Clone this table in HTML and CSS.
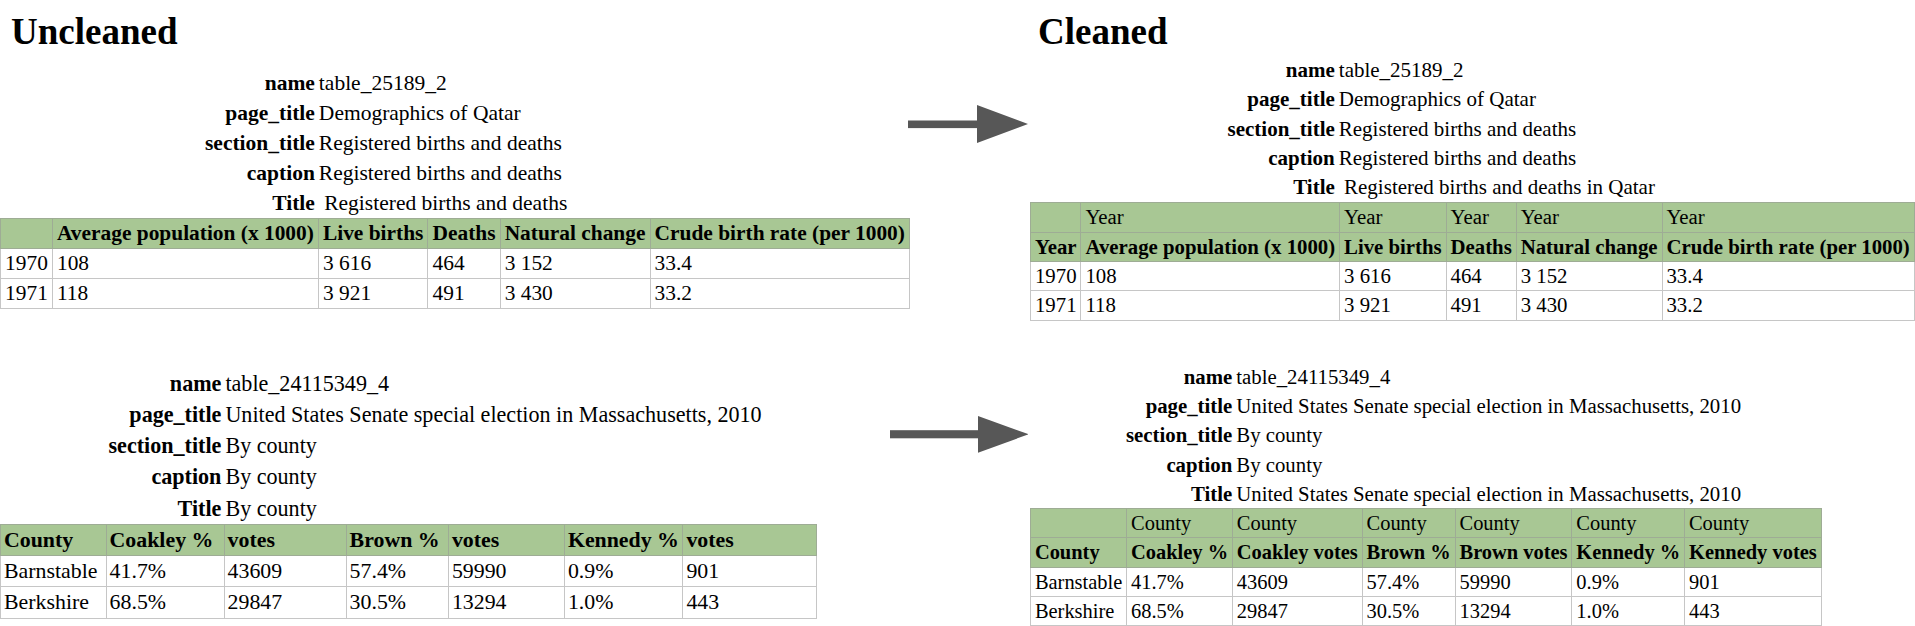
FILE: index.html
```html
<!DOCTYPE html>
<html lang="en">
<head>
<meta charset="utf-8">
<title>Uncleaned vs Cleaned</title>
<link rel="stylesheet" href="styles.css">
</head>
<body>
<div class="figure">
  <div class="row row-1">
    <section class="panel panel-u1">
      <h1 class="panel-title">Uncleaned</h1>
      <div class="meta">
        <span class="k">name</span><span class="v">table_25189_2</span>
        <span class="k">page_title</span><span class="v">Demographics of Qatar</span>
        <span class="k">section_title</span><span class="v">Registered births and deaths</span>
        <span class="k">caption</span><span class="v">Registered births and deaths</span>
        <span class="k">Title</span><span class="v">&nbsp;Registered births and deaths</span>
      </div>
      <table class="data">
        <thead>
          <tr><th></th><th>Average population (x 1000)</th><th>Live births</th><th>Deaths</th><th>Natural change</th><th>Crude birth rate (per 1000)</th></tr>
        </thead>
        <tbody>
          <tr><td>1970</td><td>108</td><td>3 616</td><td>464</td><td>3 152</td><td>33.4</td></tr>
          <tr><td>1971</td><td>118</td><td>3 921</td><td>491</td><td>3 430</td><td>33.2</td></tr>
        </tbody>
      </table>
    </section>
    <div class="arrow arrow-1">
      <svg viewBox="0 0 120 38" width="120" height="38"><rect x="0" y="15.5" width="71" height="7.6" fill="#575757"/><polygon points="69,0 120,19 69,38" fill="#575757"/></svg>
    </div>
    <section class="panel panel-c1">
      <h1 class="panel-title">Cleaned</h1>
      <div class="meta">
        <span class="k">name</span><span class="v">table_25189_2</span>
        <span class="k">page_title</span><span class="v">Demographics of Qatar</span>
        <span class="k">section_title</span><span class="v">Registered births and deaths</span>
        <span class="k">caption</span><span class="v">Registered births and deaths</span>
        <span class="k">Title</span><span class="v">&nbsp;Registered births and deaths in Qatar</span>
      </div>
      <table class="data">
        <thead>
          <tr><th></th><th class="sub">Year</th><th class="sub">Year</th><th class="sub">Year</th><th class="sub">Year</th><th class="sub">Year</th></tr>
          <tr><th>Year</th><th>Average population (x 1000)</th><th>Live births</th><th>Deaths</th><th>Natural change</th><th>Crude birth rate (per 1000)</th></tr>
        </thead>
        <tbody>
          <tr><td>1970</td><td>108</td><td>3 616</td><td>464</td><td>3 152</td><td>33.4</td></tr>
          <tr><td>1971</td><td>118</td><td>3 921</td><td>491</td><td>3 430</td><td>33.2</td></tr>
        </tbody>
      </table>
    </section>
  </div>

  <div class="row row-2">
    <section class="panel panel-u2">
      <div class="meta">
        <span class="k">name</span><span class="v">table_24115349_4</span>
        <span class="k">page_title</span><span class="v">United States Senate special election in Massachusetts, 2010</span>
        <span class="k">section_title</span><span class="v">By county</span>
        <span class="k">caption</span><span class="v">By county</span>
        <span class="k">Title</span><span class="v">By county</span>
      </div>
      <table class="data fixed">
        <colgroup>
          <col class="c1"><col class="c2"><col class="c3"><col class="c4"><col class="c5"><col class="c6"><col class="c7">
        </colgroup>
        <thead>
          <tr><th>County</th><th>Coakley %</th><th>votes</th><th>Brown %</th><th>votes</th><th>Kennedy %</th><th>votes</th></tr>
        </thead>
        <tbody>
          <tr><td>Barnstable</td><td>41.7%</td><td>43609</td><td>57.4%</td><td>59990</td><td>0.9%</td><td>901</td></tr>
          <tr><td>Berkshire</td><td>68.5%</td><td>29847</td><td>30.5%</td><td>13294</td><td>1.0%</td><td>443</td></tr>
        </tbody>
      </table>
    </section>
    <div class="arrow arrow-2">
      <svg viewBox="0 0 138 37" width="138" height="37"><rect x="0" y="14.2" width="90" height="8.1" fill="#575757"/><polygon points="88,0 138.5,18.3 88,36.7" fill="#575757"/></svg>
    </div>
    <section class="panel panel-c2">
      <div class="meta">
        <span class="k">name</span><span class="v">table_24115349_4</span>
        <span class="k">page_title</span><span class="v">United States Senate special election in Massachusetts, 2010</span>
        <span class="k">section_title</span><span class="v">By county</span>
        <span class="k">caption</span><span class="v">By county</span>
        <span class="k">Title</span><span class="v">United States Senate special election in Massachusetts, 2010</span>
      </div>
      <table class="data">
        <thead>
          <tr><th></th><th class="sub">County</th><th class="sub">County</th><th class="sub">County</th><th class="sub">County</th><th class="sub">County</th><th class="sub">County</th></tr>
          <tr><th>County</th><th>Coakley %</th><th>Coakley votes</th><th>Brown %</th><th>Brown votes</th><th>Kennedy %</th><th>Kennedy votes</th></tr>
        </thead>
        <tbody>
          <tr><td>Barnstable</td><td>41.7%</td><td>43609</td><td>57.4%</td><td>59990</td><td>0.9%</td><td>901</td></tr>
          <tr><td>Berkshire</td><td>68.5%</td><td>29847</td><td>30.5%</td><td>13294</td><td>1.0%</td><td>443</td></tr>
        </tbody>
      </table>
    </section>
  </div>
</div>
</body>
</html>
```

FILE: styles.css
```css
html, body {
  margin: 0;
  padding: 0;
  overflow: hidden;
  background: #ffffff;
}

body {
  width: 1915px;
  height: 626px;
  font-family: "Liberation Serif", "Times New Roman", serif;
  color: #000000;
}

.figure {
  display: flex;
  flex-direction: column;
}

.row {
  display: flex;
  align-items: flex-start;
}

.row-1 {
  height: 321px;
}

.panel {
  flex: none;
}

.panel-u1 {
  width: 908px;
  --fs: 21.4px;
  --mfs: 21.5px;
  --rh: 30px;
}

.panel-c1 {
  flex: 1;
  min-width: 0;
  --fs: 20.8px;
  --mfs: 21px;
  --rh: 29.3px;
}

.panel-u2 {
  width: 890px;
  margin-top: 46.5px;
  --fs: 21.85px;
  --mfs: 22.1px;
  --rh: 31.25px;
}

.panel-c2 {
  flex: 1;
  min-width: 0;
  margin-top: 40.7px;
  --fs: 20.45px;
  --mfs: 20.8px;
  --rh: 29.3px;
}

.arrow {
  flex: none;
  margin-right: 2px;
}

.arrow svg {
  display: block;
}

.arrow-1 {
  width: 120px;
  height: 38px;
  margin-top: 105px;
}

.arrow-2 {
  width: 138px;
  height: 37px;
  margin-top: 95px;
}

.panel-title {
  margin: 13px 0 0;
  font-size: 37px;
  line-height: 37px;
  font-weight: 700;
}

.panel-u1 .panel-title {
  padding-left: 11px;
}

.panel-c1 .panel-title {
  padding-left: 8px;
}

.meta {
  display: grid;
  grid-template-columns: max-content max-content;
  column-gap: 4px;
  font-size: var(--mfs);
  line-height: var(--rh);
  white-space: nowrap;
}

.meta .k {
  font-weight: 700;
  text-align: right;
}

.panel-u1 .meta {
  margin: 18px 0 0 205px;
}

.panel-c1 .meta {
  margin: 6px 0 0 197.5px;
}

.panel-u2 .meta {
  margin-left: 108.5px;
}

.panel-c2 .meta {
  margin-left: 96px;
}

table.data {
  border-collapse: collapse;
  font-size: var(--fs);
  line-height: calc(var(--rh) - 1px);
  border: 1px solid #b3b3b3;
}

.data th,
.data td {
  padding: 0 0.19em;
  text-align: left;
  white-space: nowrap;
  vertical-align: middle;
  border: 1px solid #c6c6c6;
}

.data thead th {
  background: #a8c794;
  border-color: #9eac95;
  font-weight: 700;
}

.data thead th.sub {
  font-weight: 400;
}

.data.fixed {
  table-layout: fixed;
  width: 816px;
}

.data.fixed th,
.data.fixed td {
  padding: 0 3px;
  overflow: visible;
}

.fixed .c1 { width: 105.6px; }
.fixed .c2 { width: 118px; }
.fixed .c3 { width: 122px; }
.fixed .c4 { width: 102.3px; }
.fixed .c5 { width: 116px; }
.fixed .c6 { width: 118.5px; }
.fixed .c7 { width: 133.5px; }
```
